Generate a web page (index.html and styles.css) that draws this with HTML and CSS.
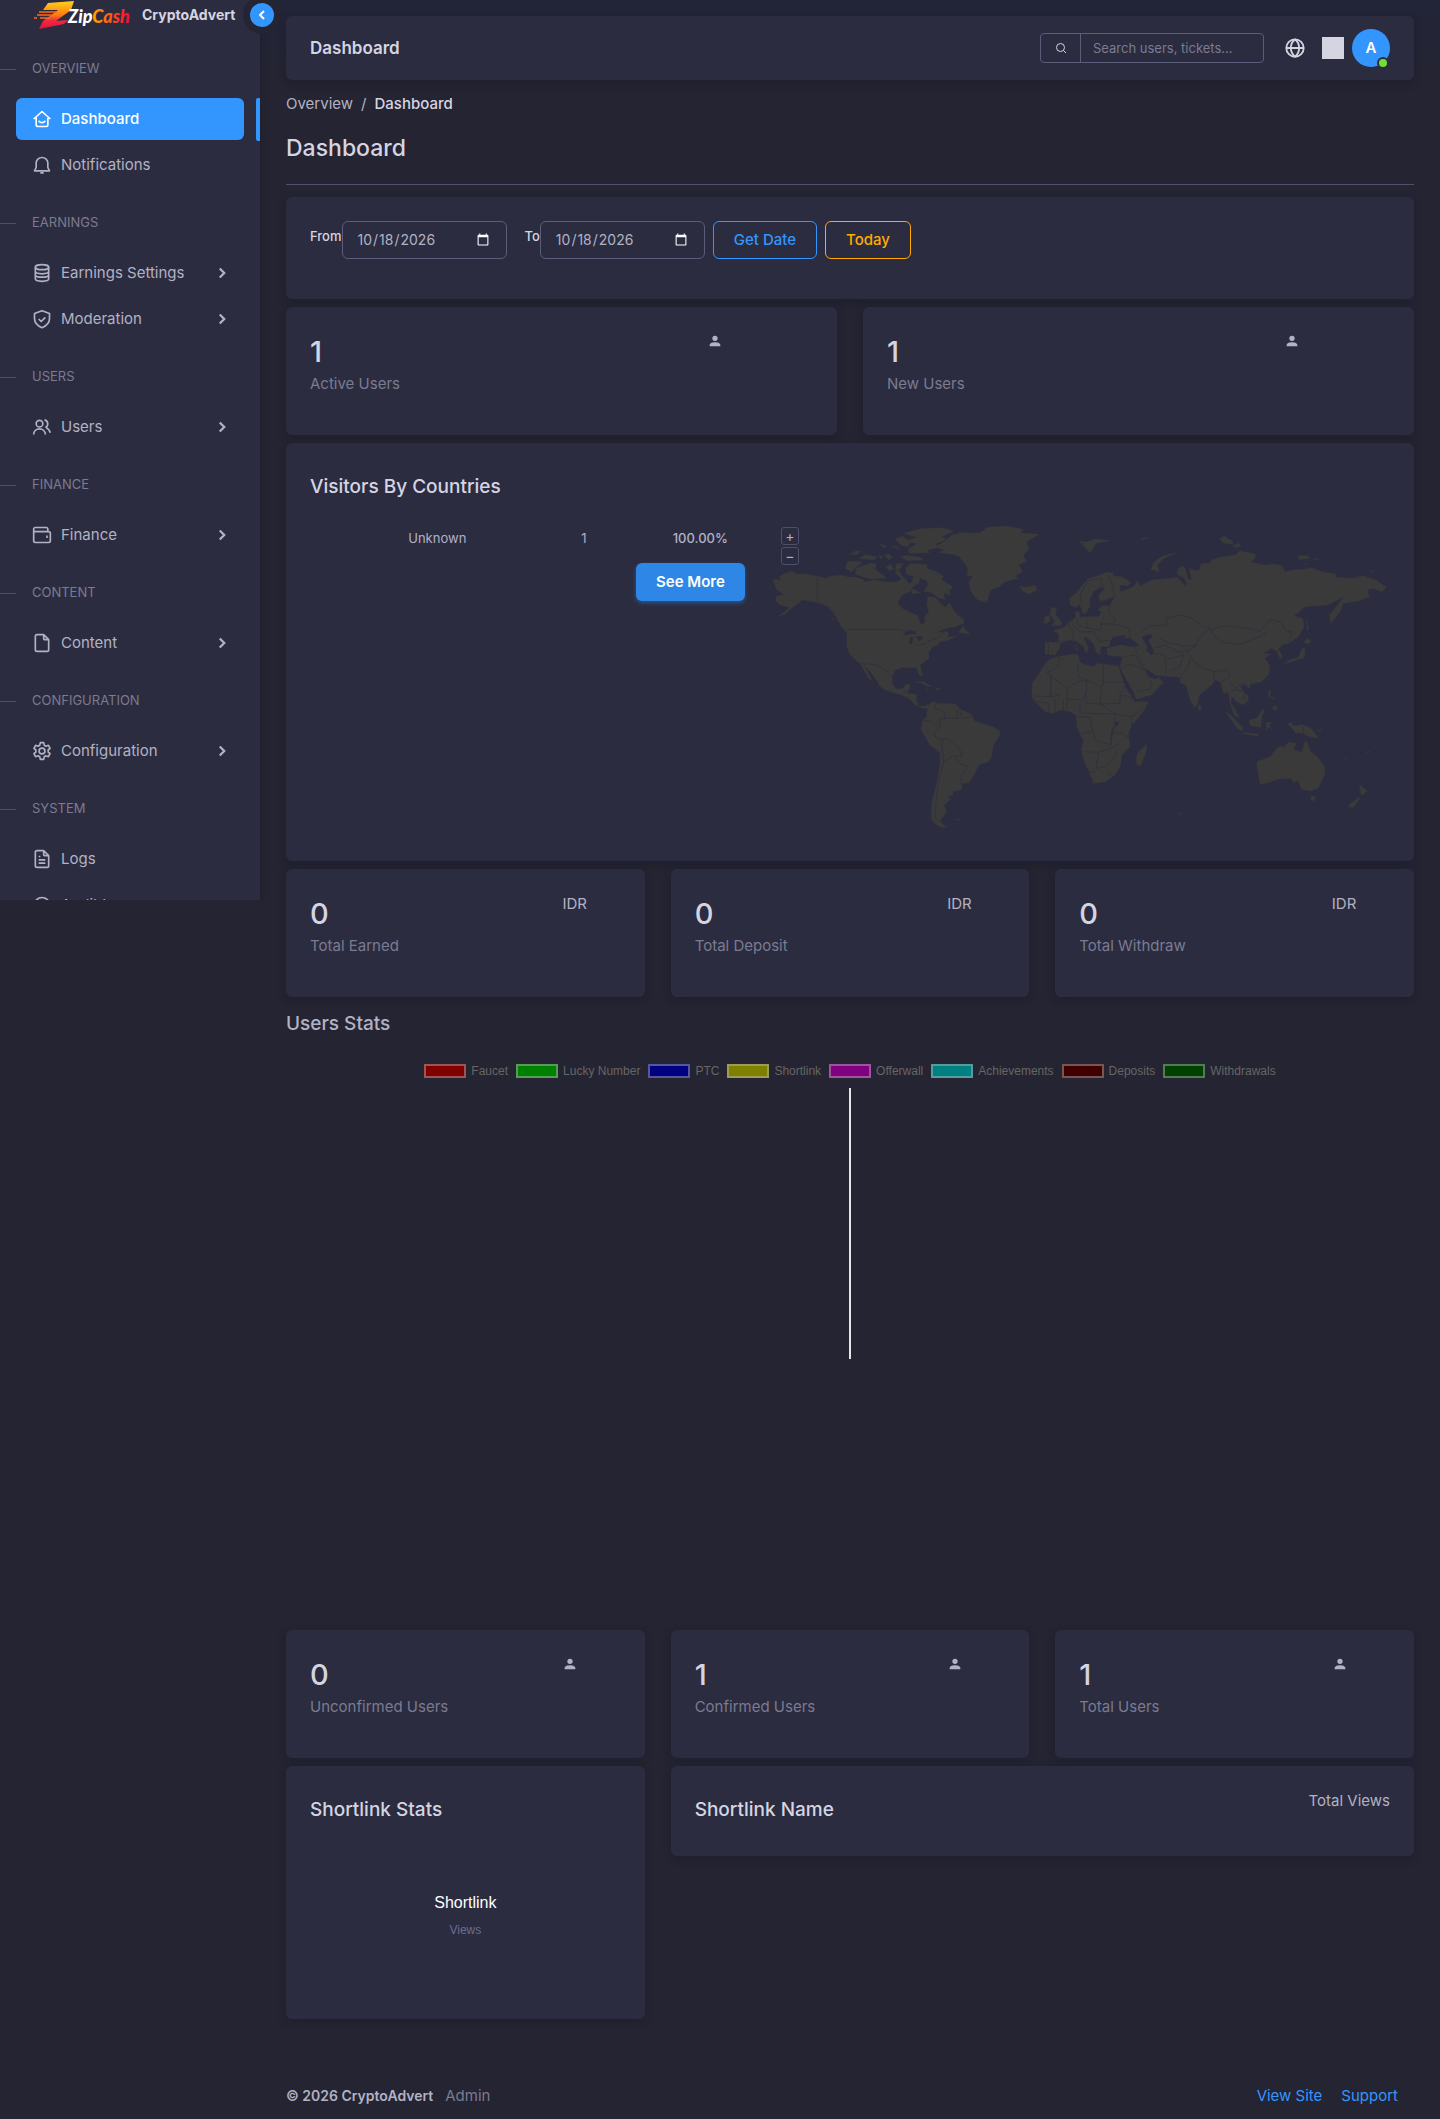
FILE: index.html
```html
<!DOCTYPE html>
<html lang="en">
<head>
<meta charset="utf-8">
<meta name="viewport" content="width=device-width, initial-scale=1">
<title>Dashboard - CryptoAdvert</title>
<link rel="stylesheet" href="styles.css">
</head>
<body>
<svg class="sprite" aria-hidden="true">
  <symbol id="i-chevron" viewBox="0 0 24 24"><path d="M9 6l6 6-6 6"/></symbol>
  <symbol id="i-user" viewBox="0 0 24 24"><path d="M12 12a4 4 0 1 0 0-8 4 4 0 0 0 0 8zm0 2c-3 0-8 1-8 4v2h16v-2c0-3-5-4-8-4z"/></symbol>
</svg>
<div class="layout">
  <aside class="sidebar">
    <div class="brand">
      <svg class="logo" viewBox="0 0 100 30" role="img" aria-label="ZipCash">
        <defs>
          <linearGradient id="bolt" x1="0" y1="0" x2="0" y2="1"><stop offset="0" stop-color="#ffd21c"/><stop offset=".5" stop-color="#ff7a12"/><stop offset=".7" stop-color="#f02a3c"/><stop offset="1" stop-color="#e01243"/></linearGradient>
          <linearGradient id="cash" gradientUnits="userSpaceOnUse" x1="58" y1="0" x2="98" y2="0"><stop offset="0" stop-color="#ffa800"/><stop offset=".45" stop-color="#ff5a14"/><stop offset="1" stop-color="#f5003c"/></linearGradient>
        </defs>
        <path fill="url(#bolt)" d="M14 3 40 1 37 10 22 21 34 20 30 24 5 29 9 21 24 10 9 10Z"/>
        <path d="M5 12h18M3 15h16M0 18h3M6 18h10" stroke="#ff6a14" stroke-width="1.4"/>
        <text x="34" y="23" class="logo-text" fill="#fff">Zip<tspan fill="url(#cash)">Cash</tspan></text>
      </svg>
      <span class="brand-name">CryptoAdvert</span>
    </div>
    <button class="collapse" type="button" aria-label="Collapse menu"><svg viewBox="0 0 24 24"><path d="M15 6l-6 6 6 6"/></svg></button>
    <nav>
      <h2 class="nav-head">OVERVIEW</h2>
      <a class="nav-item active" href="#"><svg viewBox="0 0 24 24"><path d="M19 9v10a2 2 0 0 1-2 2H7a2 2 0 0 1-2-2V9M2 12l10-9 10 9M8 14c2 3 6 3 8 0"/></svg><span>Dashboard</span></a>
      <a class="nav-item" href="#"><svg viewBox="0 0 24 24"><path d="M12 2v2M12 3a7 7 0 0 0-7 7v5l-2 4h18l-2-4v-5a7 7 0 0 0-7-7zM10 21.500h4"/></svg><span>Notifications</span></a>
      <h2 class="nav-head">EARNINGS</h2>
      <a class="nav-item" href="#"><svg viewBox="0 0 24 24"><ellipse cx="12" cy="5" rx="8" ry="3"/><path d="M4 5v14c0 4 16 4 16 0V5M4 10c0 4 16 4 16 0M4 14c0 4 16 4 16 0"/></svg><span>Earnings Settings</span><svg class="chev"><use href="#i-chevron"/></svg></a>
      <a class="nav-item" href="#"><svg viewBox="0 0 24 24"><path d="M12 2l9 3.500v6c0 5-4 9-9 11-5-2-9-6-9-11v-6zM8 12l3 3 5-5"/></svg><span>Moderation</span><svg class="chev"><use href="#i-chevron"/></svg></a>
      <h2 class="nav-head">USERS</h2>
      <a class="nav-item" href="#"><svg viewBox="0 0 24 24"><circle cx="9" cy="8" r="4"/><path d="M2 21c0-9 14-9 14 0M15 3.500c5 1 5 8 1 9M17 13c3 1 4 3 5 6"/></svg><span>Users</span><svg class="chev"><use href="#i-chevron"/></svg></a>
      <h2 class="nav-head">FINANCE</h2>
      <a class="nav-item" href="#"><svg viewBox="0 0 24 24"><path d="M19 8V5a2 2 0 0 0-2-2H4a2 2 0 0 0-2 2v14a2 2 0 0 0 2 2h16a2 2 0 0 0 2-2V10a2 2 0 0 0-2-2H2M18 12.500v3"/></svg><span>Finance</span><svg class="chev"><use href="#i-chevron"/></svg></a>
      <h2 class="nav-head">CONTENT</h2>
      <a class="nav-item" href="#"><svg viewBox="0 0 24 24"><path d="M14 2v5a1 1 0 0 0 1 1h5M18 22H6a2 2 0 0 1-2-2V4a2 2 0 0 1 2-2h8l6 6v12a2 2 0 0 1-2 2z"/></svg><span>Content</span><svg class="chev"><use href="#i-chevron"/></svg></a>
      <h2 class="nav-head">CONFIGURATION</h2>
      <a class="nav-item" href="#"><svg viewBox="0 0 24 24"><path d="M10 2h4l.7 3 2 1.200 3-1 2 3.600-2.300 2v2.400l2.300 2-2 3.600-3-1-2 1.200-.7 3h-4l-.7-3-2-1.200-3 1-2-3.600 2.300-2v-2.400l-2.300-2 2-3.600 3 1 2-1.200z"/><circle cx="12" cy="12" r="3.500"/></svg><span>Configuration</span><svg class="chev"><use href="#i-chevron"/></svg></a>
      <h2 class="nav-head">SYSTEM</h2>
      <a class="nav-item" href="#"><svg viewBox="0 0 24 24"><path d="M14 2v5a1 1 0 0 0 1 1h5M18 22H6a2 2 0 0 1-2-2V4a2 2 0 0 1 2-2h8l6 6v12a2 2 0 0 1-2 2zM8 9h2M8 13h8M8 17h8"/></svg><span>Logs</span></a>
      <a class="nav-item" href="#"><svg viewBox="0 0 24 24"><circle cx="12" cy="12" r="9"/><path d="M12 7v5l3 3"/></svg><span>Audit Log</span></a>
    </nav>
  </aside>

  <div class="page">
    <header class="card topbar">
      <span class="topbar-title">Dashboard</span>
      <form class="search" role="search">
        <button type="submit" aria-label="Search"><svg viewBox="0 0 24 24"><circle cx="11" cy="11" r="8"/><path d="M17 17l5 5"/></svg></button>
        <input type="search" aria-label="Search" placeholder="Search users, tickets...">
      </form>
      <button class="icon-btn" type="button" aria-label="Language"><svg viewBox="0 0 24 24"><circle cx="12" cy="12" r="9.500"/><path d="M2.500 12h19M12 2.500c-6 5-6 14 0 19M12 2.500c6 5 6 14 0 19"/></svg></button>
      <button class="theme-btn" type="button" aria-label="Theme"></button>
      <a class="avatar" href="#" aria-label="Account">A</a>
    </header>

    <main>
      <nav class="crumbs" aria-label="Breadcrumb"><a href="#">Overview</a><span>/</span><b>Dashboard</b></nav>
      <h1>Dashboard</h1>

      <form class="card filter">
        <label for="from">From</label><input id="from" type="date" value="2026-10-18">
        <label for="to" class="to">To</label><input id="to" type="date" value="2026-10-18">
        <button class="btn outline-primary" type="button">Get Date</button>
        <button class="btn outline-warning" type="button">Today</button>
      </form>

      <div class="row two">
        <section class="card stat"><div><strong>1</strong><p>Active Users</p></div><div><svg class="person"><use href="#i-user"/></svg></div></section>
        <section class="card stat"><div><strong>1</strong><p>New Users</p></div><div><svg class="person"><use href="#i-user"/></svg></div></section>
      </div>

      <section class="card visitors">
        <h3>Visitors By Countries</h3>
        <div class="visitors-body">
          <div class="visitors-list">
            <table><tbody><tr><td class="flag"></td><td class="country">Unknown</td><td class="count">1</td><td class="share">100.00%</td></tr></tbody></table>
            <button class="btn primary" type="button">See More</button>
          </div>
          <div class="map">
            <svg viewBox="33 51 1857 960" role="img" aria-label="World map">
              <g class="land">
                <path d="M37 237 60 240 64 236 56 230 75 220 95 214 112 222 135 222 172 228 195 235 215 228 243 226 262 230 290 232 312 240 310 246 345 240 385 247 410 245 425 237 404 218 416 208 424 226 440 240 446 252 456 246 460 229 480 232 478 248 457 262 450 275 425 285 413 308 425 325 450 337 472 346 480 370 488 374 495 364 493 350 506 335 500 315 503 290 525 292 540 308 556 322 568 308 580 330 592 345 610 358 612 370 580 382 560 386 538 402 558 392 566 400 562 412 592 408 560 422 540 425 532 436 518 440 505 458 508 475 480 495 488 528 478 525 468 502 450 504 430 502 405 510 396 530 398 555 410 568 430 565 437 553 452 553 446 568 440 580 468 583 470 605 478 618 495 618 506 612 502 625 485 624 462 612 450 597 425 585 405 580 380 572 358 558 352 545 330 515 312 495 337 542 325 535 300 490 283 478 268 460 260 440 261 400 245 382 228 350 205 322 172 308 150 303 125 300 112 312 95 325 75 342 53 350 90 322 80 320 60 315 45 300 50 288 72 284 50 270Z"/>
                <path d="M240 376 268 390 268 400 252 390ZM215 350l6 10-4 2zM595 398l15-22 4 12 14 12-2 4-10-4z"/>
                <path d="M502 620 512 610 525 603 532 612 545 610 585 612 600 628 635 643 642 662 680 675 700 681 718 692 720 705 700 735 695 770 685 785 655 795 645 820 625 850 603 850 607 865 597 873 580 872 578 885 562 890 572 898 552 915 560 935 545 955 540 962 550 975 562 980 545 983 525 972 513 955 515 910 522 880 533 840 540 790 540 760 510 735 483 690 488 660 500 650Z"/>
                <path d="M525 142 555 122 575 105 610 97 630 100 660 98 680 82 740 78 790 88 780 98 836 103 800 125 806 150 790 165 798 185 776 195 788 215 765 228 775 235 735 245 720 258 692 270 680 308 650 298 630 270 626 245 638 230 620 225 624 205 598 170 580 163 536 158 552 150Z"/>
                <path d="M430 100 480 86 540 83 582 92 545 110 560 118 530 130 528 144 500 150 510 158 450 160 442 148 470 132 440 122 470 112ZM405 118l22-10 25 18-8 14-18-2zM422 172l16-6 44 6 6 8-44 2zM436 205l14-14 50 2 2 14 28 8 20 14-5 10 34 22-12 12 4 14-20-8 4 20-18-4-24-18-22-2 14-22-6-12-60-18zM288 205l44-16 16 2-2 18 26 18 6 8-50 2-42-14zM254 205l8-20 34-2 10 6-22 16-8 10zM268 164l20-12 14 2-12 10zM296 176l20-12 36 6-10 10zM355 165l8 12 8-8zM372 165l15-4 10 12-12 6zM358 130l22 8-8 6zM392 138l20 2 8 10zM378 200l14-8 10 16-16 4zM408 192l22-2-12 18-12 2zM455 265l28 14-28 2zM778 258l20 4 28-6 4 14-22 12-20-8z"/>
                <path d="M466 548l22-4 28 16-14-2-20-10zM524 563l20 3-14 5zM498 566l8 2-6 3zM585 958l16-2-6 5z"/>
                <path d="M958 124l22 2 30-10 40 6-42 8-18 28-12-12zM874 322l16 2-4 20 20 24-2 8-30 2 10-14-14-20zM852 352l16-6 2 18-16 8zM948 430l4 22-4-2z"/>
              </g>
              <g transform="translate(960 0)">
                <g class="land">
                  <path d="M-32 295-12 280 5 258 25 236 60 225 80 217 100 218 100 228 125 230 152 247 145 258 118 256 122 275 150 265 165 255 172 243 180 258 215 240 260 236 290 232 300 240 318 260 320 250 312 235 290 222 295 205 312 198 318 215 325 238 335 240 328 205 345 212 358 210 362 192 390 188 395 180 420 172 465 165 480 152 527 162 525 175 510 185 550 195 578 192 602 195 615 215 640 210 670 208 690 203 735 217 765 222 770 232 820 235 850 227 890 242 920 262 905 275 880 265 862 270 868 290 835 303 790 310 780 335 752 372 748 345 765 325 790 292 740 316 675 320 642 348 668 355 672 380 655 410 625 430 605 435 595 448 608 470 600 478 592 455 575 445 550 460 574 462 555 475 570 498 565 525 545 545 510 553 508 568 495 552 480 560 505 590 505 602 488 615 470 605 455 590 452 608 470 635 478 655 462 645 450 610 445 578 430 580 420 545 405 540 395 555 358 585 352 615 342 622 328 595 318 555 300 548 300 532 270 530 225 525 205 510 190 503 205 530 228 538 235 530 250 547 215 585 168 598 160 575 125 515 120 500 128 470 100 468 82 465 80 445 120 435 165 442 178 436 148 412 132 416 138 405 100 410 90 425 88 440 62 440 60 465 48 455 40 430 18 412 10 412 25 442 20 460 10 440-12 422-38 422-60 430-62 445-75 465-105 462-105 427-65 427-65 400-82 392-50 383-40 372-22 360-12 350-15 335-2 335 0 352 20 350 55 350 65 335 52 330 68 316 88 318 104 290 60 305 55 285 75 265 60 262 40 275 28 300 30 320 15 342 8 340 0 312-12 322-30 315Z"/>
                  <path d="M-85 475-60 468-15 463-5 465-2 485 10 492 40 500 50 490 115 498 120 515 135 560 165 605 205 605 190 635 155 675 145 700 150 740 125 765 122 795 105 825 75 845 40 850 35 835 15 790 3 755 10 720-10 680-12 645-30 635-55 630-85 640-105 635-130 610-145 590-143 550-110 500-95 480Z"/>
                  <path d="M200 731 200 750 182 797 170 795 168 775 175 755ZM353 618l8-4 2 14-6 5zM437 636l14 8 38 40-2 10-16-10zM490 697l46 6-4 6-40-8zM506 660l24-6 18-26 6 8-8 10-4 36-30-4zM558 666l20 2-10 6 8 18-12-12-4 12zM622 670l14-2 4 10 30-4 26 14 20 28-34-8-20-10-14 2z"/>
                  <path d="M530 785 570 770 590 745 603 738 610 742 625 727 648 730 640 748 665 757 675 722 682 728 692 755 712 770 734 800 733 825 715 865 690 873 665 868 652 840 642 850 632 835 590 838 565 848 540 852 532 810ZM692 888l16 2-6 14-8-4zM838 853l14 12 10 8-16 14-4-6zM803 918l34-28 2 8-20 25zM565 570l8 4-4 16 14 4-2 4-16-6zM574 622l16-6 2 14-10 0zM568 532l-4 12-2-4zM612 490l20-12 22-6 14-30 8 6-4 26-30 8-22 8zM672 428l8-14 14 10-10 8zM678 356l8 32-4 4z"/>
                  <path d="M212 208l10-22 24-18 48-12-44 20-18 20 6 20zM418 116l14-8 26 16 0 10-30-6zM460 136l16-6 8 8-22 5zM652 168l28-2 12 8-34 6zM698 174l20 4-18 1zM668 192l14 0-6 3zM868 214l12-2-4 5zM183 116l22-4-14 7zM-54 478l10 0-6 4zM296 939h8v4h-8zM792 770l10 8-3 1zM858 757l12-4-6 6zM712 692l16-6-8 8z"/>
                </g>
                <path class="sea" d="M185 410 212 402 216 412 204 420 222 455 214 466 198 450 202 440 192 424ZM104 668l14-6-4 14-8 4zM94 690l6 16-4-4z"/>
                <path class="edge" d="M5 310 0 285 25 242 60 235 70 262M85 225 95 250 104 290M88 318 88 340 105 360 100 372 148 385 150 410M185 395 205 378 262 375 258 355 300 345 338 355 365 378 390 385 355 415 350 435 310 440 295 432 270 430 235 414M392 388 435 378 480 382 520 388 558 400 520 418 480 433 430 428 405 410 392 388M540 392 570 358 600 365 620 395 637 395 625 425M350 435 322 455 335 475 355 500 400 515 440 510 450 530 425 545M220 445 255 435 300 458 325 450M165 445 180 475 190 503M215 460 255 465 258 525M258 478 310 465 300 500 272 512M330 475 325 500 300 532M130 470 165 465 190 508M125 505 150 492 190 508M165 575 210 568 215 540M400 515 402 545M450 545 468 570 495 575 490 600M455 575 470 560 490 552M20 350 22 385 60 390 70 350M-10 355-5 375 20 385M-25 372 0 395 40 395 60 425 88 420M-65 427-22 420-20 395-38 372M-95 430-95 460M100 372 60 372M670 678v32"/>
                <path class="edge" d="M70 495v62M70 547h62M-7 490-5 530 65 560 60 610M-60 468-65 500-100 518-40 565-5 545 18 540 20 570 10 600-38 597-40 565M-105 500-88 525V590M-140 588-90 590-60 585M-130 605-95 610-92 636M-75 600v36M-50 598v34M-38 598-42 630M18 575 20 610 60 612 120 610 120 580 135 560M60 612 105 642 155 650 190 625M120 585 150 590 160 605M0 610 0 640 30 640 105 642 100 700 125 700 148 715M-10 650 30 650 38 695 5 700M40 695 45 720 92 735 95 690M5 755 55 757 90 745 118 730M55 757 48 805 75 800 105 770 110 745M25 815 45 815M155 645v30M100 680 95 710 92 735M80 820l8-5 6 8-8 6z"/>
              </g>
              <path class="sea" d="M426 404 445 390 466 394 468 402ZM448 434 450 412 460 412 456 430ZM466 408 490 410 478 424ZM470 438 496 428 494 432ZM530 398l20-10 30-8-18 8-12 6z"/>
              <path class="edge" d="M172 228V305L205 322 228 345M262 388H414L440 394M500 425 538 412 555 392M300 490 340 494 360 498 380 515 396 528M428 582 440 570M525 605 525 625 552 635 555 655 595 655 590 630M600 630 605 655 635 650M485 660 515 665 540 680 520 705 540 718 565 716 585 735 605 755 605 768 580 768 550 785 545 720M540 680 540 655 555 655M580 768 600 790 625 800 605 825 603 850M550 785 535 850 528 900 525 955 545 965"/>
            </svg>
            <div class="zoom"><button type="button" aria-label="Zoom in">+</button><button type="button" aria-label="Zoom out">−</button></div>
          </div>
        </div>
      </section>

      <div class="row three">
        <section class="card stat"><div><strong>0</strong><p>Total Earned</p></div><div>IDR</div></section>
        <section class="card stat"><div><strong>0</strong><p>Total Deposit</p></div><div>IDR</div></section>
        <section class="card stat"><div><strong>0</strong><p>Total Withdraw</p></div><div>IDR</div></section>
      </div>

      <section class="chart">
        <h3>Users Stats</h3>
        <ul class="legend">
          <li class="c1">Faucet</li><li class="c2">Lucky Number</li><li class="c3">PTC</li><li class="c4">Shortlink</li><li class="c5">Offerwall</li><li class="c6">Achievements</li><li class="c7">Deposits</li><li class="c8">Withdrawals</li>
        </ul>
        <div class="plot"></div>
      </section>

      <div class="row three">
        <section class="card stat"><div><strong>0</strong><p>Unconfirmed Users</p></div><div><svg class="person"><use href="#i-user"/></svg></div></section>
        <section class="card stat"><div><strong>1</strong><p>Confirmed Users</p></div><div><svg class="person"><use href="#i-user"/></svg></div></section>
        <section class="card stat"><div><strong>1</strong><p>Total Users</p></div><div><svg class="person"><use href="#i-user"/></svg></div></section>
      </div>

      <div class="row three links">
        <section class="card donut"><h3>Shortlink Stats</h3><div class="donut-label"><b>Shortlink</b><span>Views</span></div></section>
        <section class="card names"><h3>Shortlink Name</h3><span>Total Views</span></section>
      </div>
    </main>

    <footer>
      <span class="copy">© 2026 CryptoAdvert</span><span class="role">Admin</span>
      <div class="footer-links"><a href="#">View Site</a><a href="#">Support</a></div>
    </footer>
  </div>
</div>
</body>
</html>
```
FILE: styles.css
```css
*, *::before, *::after { box-sizing: border-box; }
:root {
  --bg: #252432;
  --card: #2b2c40;
  --line: #4e4f6c;
  --text: #b2b2c4;
  --heading: #d5d5e2;
  --muted: #7b7b91;
  --primary: #3396ff;
  --warning: #ffab00;
}
body {
  margin: 0;
  background: var(--bg);
  color: var(--text);
  font: 15px/22px Inter, "Liberation Sans", sans-serif;
}
h1, h2, h3, p, ul { margin: 0; padding: 0; }
button, input { font: inherit; color: inherit; margin: 0; }
a { color: inherit; text-decoration: none; }
svg { display: block; fill: none; stroke: currentColor; stroke-width: 2; stroke-linejoin: round; }
.sprite { display: none; }
.layout { display: grid; grid-template-columns: 260px minmax(0, 1fr); }

/* Sidebar */
.sidebar { position: relative; align-self: start; height: 900px; background: var(--card); box-shadow: 0 2px 8px rgba(10, 10, 20, .2); clip-path: inset(0 -24px 0 0); }
.brand { display: flex; align-items: center; gap: 8px; height: 36px; padding: 0 0 6px 34px; }
.logo { width: 100px; height: 30px; flex: none; stroke: none; overflow: visible; }
.logo-text { font: italic 900 18px Lato, sans-serif; }
.brand-name { color: var(--heading); font-size: 14px; font-weight: 700; }
.collapse { position: absolute; top: -4px; left: 243px; display: grid; place-items: center; width: 38px; height: 38px; padding: 0; border: 7px solid var(--bg); border-radius: 50%; background: var(--primary); color: #fff; }
.collapse svg { width: 16px; height: 16px; stroke-width: 3; }
.nav-head { position: relative; padding: 21px 32px 19px; color: var(--muted); font-size: 13px; font-weight: 400; line-height: 22px; }
.nav-head::before { content: ""; position: absolute; left: 0; top: 33px; width: 16px; height: 1px; background: var(--line); }
.nav-item { position: relative; display: flex; align-items: center; gap: 9px; height: 42px; margin: 0 16px 4px; padding: 0 13px 0 16px; border-radius: 6px; font-weight: 400; }
.nav-item svg { width: 20px; height: 20px; flex: none; }
.nav-item .chev { width: 18px; height: 18px; margin-left: auto; stroke-width: 3; stroke-linejoin: miter; }
.nav-item.active { background: var(--primary); color: #fff; font-weight: 500; }
.nav-item.active::after { content: ""; position: absolute; right: -16px; top: 0; width: 4px; height: 43px; border-radius: 2px 0 0 2px; background: var(--primary); }
.sidebar nav { height: 864px; overflow: hidden; }

/* Page */
.page { display: flex; flex-direction: column; padding: 16px 26px 0; background: linear-gradient(#222438, var(--bg) 90px); }
.card { border-radius: 6px; background: var(--card); box-shadow: 0 3px 8px rgba(16, 16, 28, .25); }
.topbar { display: flex; align-items: center; height: 64px; padding: 0 24px; }
.topbar-title { margin-right: auto; color: var(--heading); font-size: 17px; font-weight: 600; }
.search { display: flex; width: 224px; height: 30px; border: 1px solid #5c5d7a; border-radius: 4px; font-size: 13px; }
.search button { display: grid; place-items: center; width: 40px; padding: 0; border: 0; border-right: 1px solid #5c5d7a; background: none; color: var(--heading); }
.search button svg { width: 12px; height: 12px; }
.search input { flex: 1; min-width: 0; padding: 0 12px; border: 0; background: none; }
.search input::placeholder { color: var(--muted); opacity: 1; }
.icon-btn { margin-left: 20px; padding: 0; border: 0; background: none; color: var(--heading); }
.icon-btn svg { width: 22px; height: 22px; }
.theme-btn { width: 22px; height: 22px; margin: 0 8px 0 16px; padding: 0; border: 0; background: var(--heading); }
.avatar { position: relative; display: grid; place-items: center; width: 38px; height: 38px; border-radius: 50%; background: var(--primary); color: #fff; font-weight: 600; }
.avatar::after { content: ""; position: absolute; right: 1px; bottom: -2px; width: 12px; height: 12px; border: 2px solid var(--card); border-radius: 50%; background: #71dd37; }

main { display: flex; flex-direction: column; gap: 8px; }
.crumbs { display: flex; gap: 8px; margin-top: 13px; }
.crumbs b { color: var(--heading); font-weight: 500; }
h1 { margin-bottom: 4px; padding: 8px 0 19px; border-bottom: 1px solid #524f73; color: var(--heading); font-size: 23px; line-height: 34px; font-weight: 500; }
h3 { color: var(--heading); font-size: 19px; line-height: 28px; font-weight: 500; }

.filter { display: flex; align-items: flex-start; min-height: 102px; padding: 24px; }
.filter label { padding-top: 4px; color: var(--heading); font-size: 13px; font-weight: 500; }
.filter .to { margin-left: 18px; }
.filter input { width: 165px; height: 38px; padding: 0 14px; border: 1px solid #5c5d7a; border-radius: 6px; background: none; color-scheme: dark; font-size: 14px; }
.btn { height: 38px; padding: 0 20px; border: 1px solid; border-radius: 6px; background: none; font-weight: 500; }
.filter .btn { margin-left: 8px; }
.outline-primary { color: var(--primary); }
.outline-warning { color: var(--warning); }
.primary { border: 0; background: #2e87e6; color: #fff; font-weight: 600; box-shadow: 0 2px 4px rgba(51, 150, 255, .4); }

.row { display: grid; column-gap: 26px; align-items: start; }
.two { grid-template-columns: repeat(2, 1fr); }
.three { grid-template-columns: repeat(3, 1fr); }
.stat { display: grid; grid-template-columns: 3fr 1fr; min-height: 128px; padding: 24px 11px; }
.stat > div { padding: 0 13px; }
.stat strong { display: block; margin-top: 4px; color: var(--heading); font-size: 29px; line-height: 34px; font-weight: 500; }
.stat p { margin-top: 4px; color: var(--muted); }
.person { width: 16px; height: 16px; margin-top: 2px; fill: currentColor; stroke: none; }

.visitors { padding: 24px; }
.visitors h3 { padding: 6px 0 16px; }
.visitors-body { display: grid; grid-template-columns: 5fr 7fr; margin: 0 -13px; }
.visitors-list, .map { padding: 0 13px; }
.visitors-list { display: flex; flex-direction: column; align-items: flex-end; }
table { width: 100%; table-layout: fixed; border-collapse: collapse; font-size: 13px; }
td { height: 46px; padding: 0 0 4px; }
.flag { width: 18%; }
.country { width: 30%; padding-left: 20px; }
.count { width: 30%; text-align: center; }
.share { width: 22%; padding-right: 17px; text-align: right; font-weight: 500; }
.map { position: relative; height: 320px; }
.map > svg { width: 100%; height: 100%; stroke: none; }
.land { fill: #3a3a3a; stroke: #3a3a3a; stroke-width: 1; }
.sea { fill: var(--card); }
.edge { fill: none; stroke: #2d2d3d; stroke-width: 2; }
.zoom { position: absolute; left: 23px; top: 10px; display: grid; gap: 2px; }
.zoom button { width: 18px; height: 18px; padding: 0; border: 1px solid var(--line); border-radius: 3px; background: var(--card); font-size: 14px; line-height: 16px; }

.chart { display: flex; flex-direction: column; padding-top: 5px; }
.chart h3 { color: var(--text); }
.legend { display: flex; flex-wrap: wrap; justify-content: center; gap: 4px 8px; margin-top: 24px; list-style: none; color: #666; font: 12px/18px "Liberation Sans", Arial, sans-serif; }
.legend li { display: flex; align-items: center; gap: 5px; }
.legend li::before { content: ""; width: 42px; height: 14px; border: 2px solid rgba(190, 190, 190, .45); }
.c1::before { background: #800000; }
.c2::before { background: #008000; }
.c3::before { background: #000080; }
.c4::before { background: #808000; }
.c5::before { background: #800080; }
.c6::before { background: #008080; }
.c7::before { background: #400000; }
.c8::before { background: #004000; }
.plot { width: 2px; height: 271px; margin: 8px auto 263px; background: #e6e6e6; }

.donut { min-height: 253px; padding: 30px 24px; }
.donut-label { display: flex; flex-direction: column; align-items: center; gap: 8px; margin-top: 69px; font: 12px/18px "Liberation Sans", Arial, sans-serif; color: #6d6d92; }
.donut-label b { color: #fff; font-size: 16px; line-height: 20px; font-weight: 400; }
.names { grid-column: span 2; display: flex; justify-content: space-between; min-height: 90px; padding: 24px; }
.names h3 { margin-top: 6px; }

footer { display: flex; margin-top: 66px; padding: 0 16px 11px 0; }
.copy { font-size: 14px; font-weight: 600; }
.role { margin-left: 12px; color: var(--muted); }
.footer-links { display: flex; gap: 19px; margin-left: auto; color: var(--primary); }
```
